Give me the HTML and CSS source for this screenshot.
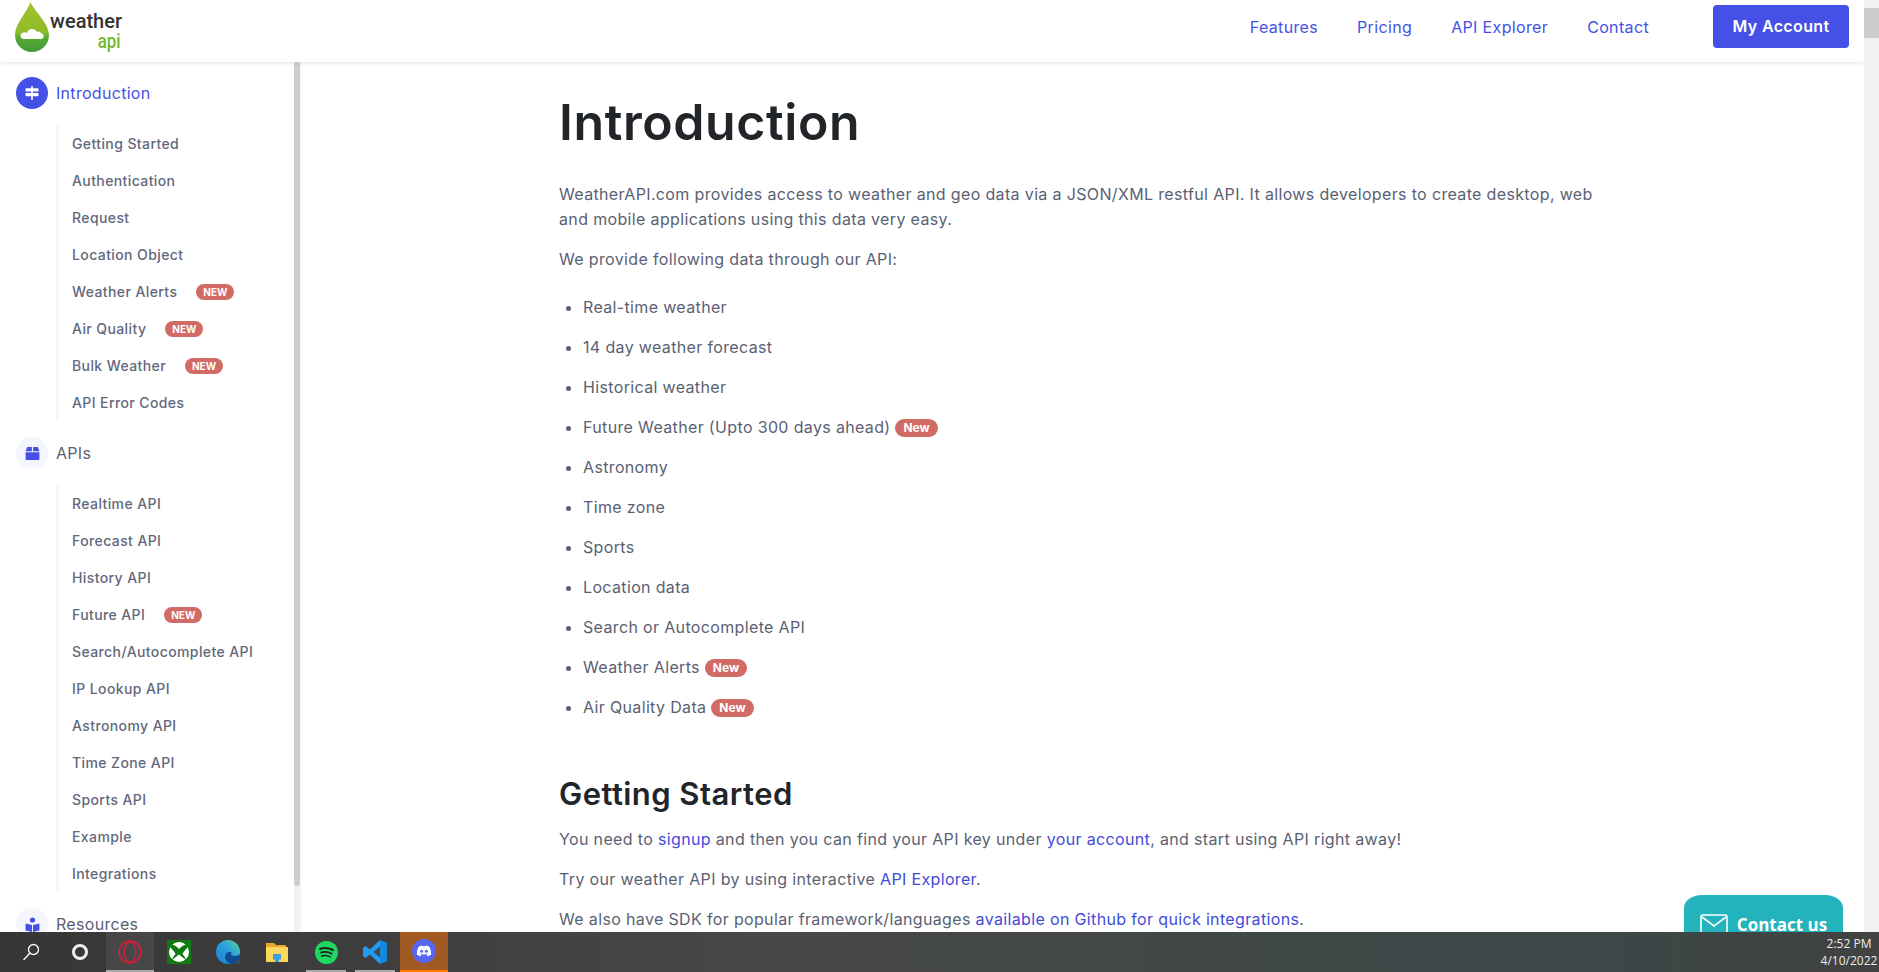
FILE: index.html
```html
<!DOCTYPE html>
<html lang="en">
<head>
    <meta charset="UTF-8">
    <title>Weather API - Documentation</title>
    <link rel="stylesheet" href="styles.css">
</head>
<body>
    <div class="page">
        <div class="window">
            <header class="topbar">
                <a class="logo" href="#">
                    <svg class="logo-drop" width="34" height="50" viewBox="0 0 34 50">
                        <defs>
                            <linearGradient id="dropFill" x1="0" y1="0" x2="0" y2="1">
                                <stop offset="0" stop-color="#a3c42c"/>
                                <stop offset="0.6" stop-color="#8fbc2b"/>
                                <stop offset="0.72" stop-color="#57a933"/>
                                <stop offset="1" stop-color="#3f9b35"/>
                            </linearGradient>
                        </defs>
                        <path d="M15.5 0 C13 9 0 21 0 33 C0 43 8 50 17 50 C26 50 34 43 34 33 C34 21 19 9 15.5 0 Z" fill="url(#dropFill)"/>
                        <path d="M9 37 C4.5 37 4.5 31 8.5 30.5 C10 30 11 30.5 12 31 C13 26 20 25.5 22 30 C23.5 29 25 29.5 26 31 C29.5 31.5 29.5 37 26 37 Z" fill="#fff"/>
                    </svg>
                    <span class="logo-text">
                        <span class="logo-weather">weather</span>
                        <span class="logo-api">api</span>
                    </span>
                </a>
                <nav class="topnav">
                    <a href="#">Features</a>
                    <a href="#">Pricing</a>
                    <a href="#">API Explorer</a>
                    <a href="#">Contact</a>
                    <a class="account-btn" href="#">My Account</a>
                </nav>
            </header>
            <div class="body-row">
                <aside class="sidebar">
                    <div class="side-head active">
                        <span class="side-icon">
                            <svg width="16" height="16" viewBox="0 0 16 16" fill="#fff">
                                <rect x="7.2" y="1" width="1.6" height="14"/>
                                <rect x="1.5" y="3.2" width="13" height="3.2" rx="0.6"/>
                                <rect x="1.5" y="8" width="13" height="3.2" rx="0.6"/>
                            </svg>
                        </span>
                        Introduction
                    </div>
                    <ul class="side-list">
                        <li>Getting Started</li>
                        <li>Authentication</li>
                        <li>Request</li>
                        <li>Location Object</li>
                        <li>Weather Alerts<span class="pill">NEW</span></li>
                        <li>Air Quality<span class="pill">NEW</span></li>
                        <li>Bulk Weather<span class="pill">NEW</span></li>
                        <li>API Error Codes</li>
                    </ul>
                    <div class="side-head">
                        <span class="side-icon">
                            <svg width="15" height="15" viewBox="0 0 15 15" fill="#4551e6">
                                <path d="M2.2 1 H6.9 V5.2 H0.6 Z"/>
                                <path d="M8.1 1 H12.8 L14.4 5.2 H8.1 Z"/>
                                <path d="M0.6 6.2 H14.4 V13 a1 1 0 0 1 -1 1 H1.6 a1 1 0 0 1 -1 -1 Z"/>
                            </svg>
                        </span>
                        APIs
                    </div>
                    <ul class="side-list">
                        <li>Realtime API</li>
                        <li>Forecast API</li>
                        <li>History API</li>
                        <li>Future API<span class="pill">NEW</span></li>
                        <li>Search/Autocomplete API</li>
                        <li>IP Lookup API</li>
                        <li>Astronomy API</li>
                        <li>Time Zone API</li>
                        <li>Sports API</li>
                        <li>Example</li>
                        <li>Integrations</li>
                    </ul>
                    <div class="side-head">
                        <span class="side-icon">
                            <svg width="15" height="15" viewBox="0 0 15 15" fill="#4551e6">
                                <circle cx="7.5" cy="3" r="2.6"/>
                                <path d="M0.6 6.5 L7 8 V15 L0.6 13.5 Z"/>
                                <path d="M14.4 6.5 L8 8 V15 L14.4 13.5 Z"/>
                            </svg>
                        </span>
                        Resources
                    </div>
                    <div class="side-scroll"><div class="side-thumb"></div></div>
                </aside>
                <main class="content">
                    <h1>Introduction</h1>
                    <p>WeatherAPI.com provides access to weather and geo data via a JSON/XML restful API. It allows developers to create desktop, web and mobile applications using this data very easy.</p>
                    <p>We provide following data through our API:</p>
                    <ul class="data-list">
                        <li>Real-time weather</li>
                        <li>14 day weather forecast</li>
                        <li>Historical weather</li>
                        <li>Future Weather (Upto 300 days ahead) <span class="pill">New</span></li>
                        <li>Astronomy</li>
                        <li>Time zone</li>
                        <li>Sports</li>
                        <li>Location data</li>
                        <li>Search or Autocomplete API</li>
                        <li>Weather Alerts <span class="pill">New</span></li>
                        <li>Air Quality Data <span class="pill">New</span></li>
                    </ul>
                    <h2>Getting Started</h2>
                    <p>You need to <a href="#">signup</a> and then you can find your API key under <a href="#">your account</a>, and start using API right away!</p>
                    <p>Try our weather API by using interactive <a href="#">API Explorer</a>.</p>
                    <p>We also have SDK for popular framework/languages <a href="#">available on Github for quick integrations</a>.</p>
                </main>
                <div class="page-scroll"><div class="page-thumb"></div></div>
            </div>
            <a class="contact-tab" href="#">
                <svg width="28" height="22" viewBox="0 0 28 22" fill="none" stroke="#fff" stroke-width="1.6">
                    <rect x="1" y="1" width="26" height="20" rx="2"/>
                    <path d="M2 3 L14 12 L26 3"/>
                </svg>
                Contact us
            </a>
        </div>
        <footer class="taskbar">
            <div class="task-search">
                <svg width="18" height="18" viewBox="0 0 18 18" fill="none" stroke="#fff" stroke-width="1.3">
                    <circle cx="11.5" cy="6.5" r="5"/>
                    <path d="M8 10 L1.5 17"/>
                </svg>
            </div>
            <div class="task-cortana"><span class="cortana-ring"></span></div>
            <div class="task-apps">
                <div class="task-app running opera">
                    <svg width="24" height="24" viewBox="0 0 24 24" fill="none" stroke="#d21f3c" stroke-width="1.5">
                        <circle cx="12" cy="12" r="11"/>
                        <ellipse cx="12" cy="12" rx="6" ry="10"/>
                    </svg>
                </div>
                <div class="task-app">
                    <svg width="24" height="24" viewBox="0 0 24 24">
                        <rect width="24" height="24" fill="#107c10"/>
                        <circle cx="12" cy="12" r="10" fill="#fff"/>
                        <path d="M12 9 C9 6 7 5 5 4.6 L3 7 C5 9 7.5 12 8.5 14 C6 17 5 19 5 20 L12 14.5 L19 20 C19 19 18 17 15.5 14 C16.5 12 19 9 21 7 L19 4.6 C17 5 15 6 12 9 Z" fill="#107c10"/>
                    </svg>
                </div>
                <div class="task-app">
                    <svg width="24" height="24" viewBox="0 0 24 24">
                        <defs>
                            <linearGradient id="edgeFill" x1="0" y1="1" x2="1" y2="0">
                                <stop offset="0" stop-color="#1b7fd0"/>
                                <stop offset="0.55" stop-color="#2a9fe0"/>
                                <stop offset="1" stop-color="#5fdc8c"/>
                            </linearGradient>
                        </defs>
                        <circle cx="12" cy="12" r="12" fill="url(#edgeFill)"/>
                        <path d="M24 14 C22 16 19 16.5 16.5 15.5 C15 15 14.6 13.5 15.6 12.5 C13 11 9 13 9 17 C9 20 11.5 23 15 24 L20 24 L24 19 Z" fill="#0e4c8f"/>
                        <path d="M24 15 C24 20 21 23 17.5 24 L24 24 Z" fill="#484848"/>
                    </svg>
                </div>
                <div class="task-app">
                    <svg width="22" height="19" viewBox="0 0 22 19">
                        <path d="M0 0 H8 L10 2 H20 V18 H0 Z" fill="#e8a92a"/>
                        <path d="M0 4 H22 V19 H0 Z" fill="#fbd75b"/>
                        <path d="M7 11 H15 V16.5 H13 V19 H9 V16.5 H7 Z" fill="#3d9fe0"/>
                    </svg>
                </div>
                <div class="task-app running short">
                    <svg width="23" height="23" viewBox="0 0 23 23">
                        <circle cx="11.5" cy="11.5" r="11.5" fill="#1ed760"/>
                        <g fill="none" stroke="#222" stroke-linecap="round">
                            <path d="M5 8 C9 6.6 14 7 18 9" stroke-width="2"/>
                            <path d="M6 11.6 C9.6 10.5 13.6 11 16.8 12.8" stroke-width="1.7"/>
                            <path d="M6.6 15 C9.6 14.2 13 14.5 15.6 16" stroke-width="1.4"/>
                        </g>
                    </svg>
                </div>
                <div class="task-app running short">
                    <svg width="24" height="24" viewBox="0 0 24 24">
                        <path d="M17 0 L24 3 V21 L17 24 L7 14.5 L2.5 18 L0 16.5 V7.5 L2.5 6 L7 9.5 Z" fill="#1f9cf0"/>
                        <path d="M17 6.5 L10.5 12 L17 17.5 Z" fill="#474747"/>
                        <path d="M17 0 L24 3 V21 L17 24 Z" fill="#0b7ac6" opacity="0.55"/>
                    </svg>
                </div>
                <div class="task-app discord">
                    <svg width="24" height="24" viewBox="0 0 24 24">
                        <circle cx="12" cy="12" r="12" fill="#5865f2"/>
                        <path d="M7 7.6 C8.2 7 9.4 6.7 10.4 6.6 L10.8 7.4 C11.6 7.3 12.4 7.3 13.2 7.4 L13.6 6.6 C14.6 6.7 15.8 7 17 7.6 C18.6 10 19.3 12.6 19.1 15.4 C17.8 16.4 16.5 16.9 15.3 17.2 L14.4 15.9 C15 15.7 15.5 15.4 16 15.1 L15.6 14.8 C13.2 15.9 10.8 15.9 8.4 14.8 L8 15.1 C8.5 15.4 9 15.7 9.6 15.9 L8.7 17.2 C7.5 16.9 6.2 16.4 4.9 15.4 C4.7 12.6 5.4 10 7 7.6 Z" fill="#fff"/>
                        <circle cx="9.6" cy="12.2" r="1.5" fill="#5865f2"/>
                        <circle cx="14.4" cy="12.2" r="1.5" fill="#5865f2"/>
                    </svg>
                </div>
            </div>
            <div class="task-clock">
                <span>2:52 PM</span>
                <span>4/10/2022</span>
            </div>
        </footer>
    </div>
</body>
</html>
```

FILE: styles.css
```css
* {
    box-sizing: border-box;
}

html,
body {
    margin: 0;
    height: 100%;
    overflow: hidden;
}

body {
    font-family: Inter, "Open Sans", sans-serif;
    color: #5a5f73;
    background-color: #fff;
}

a {
    text-decoration: none;
}

.page {
    height: 972px;
    display: flex;
    flex-direction: column;
}

.window {
    position: relative;
    flex: 1;
    min-height: 0;
    display: flex;
    flex-direction: column;
    overflow: hidden;
}

/* top bar */
.topbar {
    height: 62px;
    flex-shrink: 0;
    display: flex;
    justify-content: space-between;
    align-items: center;
    padding: 0 15px 9px 15px;
    margin-right: 15px;
    background-color: #fff;
    box-shadow: 0 1px 4px rgba(0, 0, 0, 0.12);
    position: relative;
    z-index: 2;
}

.logo {
    display: flex;
    align-items: flex-start;
    align-self: flex-start;
    height: 52px;
    margin-top: 2px;
}

.logo-text {
    display: flex;
    flex-direction: column;
    align-items: flex-end;
    width: 70px;
    margin-left: 3px;
    padding-top: 9px;
    font-family: Roboto, "Open Sans", sans-serif;
    font-weight: 500;
}

.logo-weather {
    font-size: 20px;
    line-height: 20px;
    color: #333;
}

.logo-api {
    font-size: 21px;
    line-height: 20px;
    color: #76b82a;
    transform: scaleX(0.8);
    transform-origin: right;
    margin-right: 2px;
}

.topnav {
    display: flex;
    align-items: center;
    font-size: 16px;
    letter-spacing: 0.35px;
}

.topnav a {
    color: #4551e6;
    margin-left: 39px;
}

.topnav a.account-btn {
    margin-left: 64px;
    width: 136px;
    height: 43px;
    line-height: 43px;
    text-align: center;
    background-color: #4551e6;
    color: #fff;
    font-weight: 600;
    border-radius: 4px;
}

/* body */
.body-row {
    flex: 1;
    min-height: 0;
    display: flex;
}

.sidebar {
    position: relative;
    width: 300px;
    flex-shrink: 0;
    padding: 15px 0 0 16px;
    overflow: hidden;
    box-shadow: 1px 0 3px rgba(0, 0, 0, 0.05);
}

.side-head {
    display: flex;
    align-items: center;
    gap: 8px;
    height: 32px;
    font-size: 16px;
    letter-spacing: 0.3px;
    color: #5a5f73;
}

.side-head.active {
    color: #4551e6;
}

.side-icon {
    width: 32px;
    height: 32px;
    border-radius: 50%;
    background-color: #f4f5ff;
    display: flex;
    align-items: center;
    justify-content: center;
}

.side-head.active .side-icon {
    background-color: #4551e6;
}

.side-list {
    list-style: none;
    margin: 16px 0 16px 40px;
    padding: 0 0 0 13px;
    border-left: 3px solid #f4f5ff;
    font-size: 14px;
    letter-spacing: 0.4px;
    font-weight: 500;
    color: #62677c;
}

.side-list li {
    height: 37px;
    display: flex;
    align-items: center;
}

.pill {
    display: inline-block;
    background-color: #d26a66;
    color: #fff;
    font-weight: 700;
    font-size: 12px;
    line-height: 18px;
    letter-spacing: 0;
    padding: 0 8px;
    border-radius: 9px;
    vertical-align: 1px;
}

.side-list .pill {
    font-size: 10px;
    line-height: 16px;
    padding: 0 7px;
    margin-left: 19px;
}

.side-scroll {
    position: absolute;
    top: 0;
    right: 0;
    bottom: 0;
    width: 6px;
    background-color: #f1f1f1;
}

.side-thumb {
    height: 824px;
    background-color: #cdcdcd;
    border-radius: 3px;
}

.content {
    flex: 1;
    min-width: 0;
    padding: 30px 0 0 259px;
    font-size: 16px;
    letter-spacing: 0.35px;
    line-height: 25px;
}

.content h1 {
    margin: 0 0 30px;
    font-size: 50px;
    letter-spacing: 0.6px;
    line-height: 60px;
    font-weight: 600;
    color: #212529;
}

.content p {
    width: 1050px;
    margin: 0 0 15px;
}

.content a {
    color: #3f4bd8;
}

.content h2 {
    margin: 56px 0 15px;
    font-size: 31px;
    letter-spacing: 0.45px;
    line-height: 36px;
    font-weight: 600;
    color: #212529;
}

.data-list {
    margin: 23px 0 0;
    padding: 0 0 0 24px;
}

.data-list li {
    margin-bottom: 15px;
}

.page-scroll {
    width: 15px;
    flex-shrink: 0;
    background-color: #f1f1f1;
    margin-top: -62px;
    position: relative;
    z-index: 3;
}

.page-thumb {
    height: 30px;
    margin-top: 8px;
    background-color: #cdcdcd;
}

.contact-tab {
    position: absolute;
    right: 36px;
    bottom: -14px;
    width: 159px;
    height: 51px;
    display: flex;
    align-items: flex-start;
    justify-content: center;
    gap: 9px;
    padding-top: 19px;
    background-color: #22b3bc;
    color: #fff;
    font-family: "Open Sans", sans-serif;
    font-weight: 700;
    font-size: 17px;
    line-height: 22px;
    border-radius: 18px 18px 0 0 / 13px 13px 0 0;
}

/* windows taskbar */
.taskbar {
    height: 40px;
    flex-shrink: 0;
    display: flex;
    align-items: center;
    background: linear-gradient(90deg, #363636, #474747 40%, #3c4747 85%, #424242);
    color: #fff;
    font-family: "Open Sans", sans-serif;
}

.task-search {
    width: 54px;
    padding-left: 22px;
    display: flex;
    align-items: center;
}

.task-cortana {
    width: 52px;
    display: flex;
    justify-content: center;
}

.cortana-ring {
    width: 16px;
    height: 16px;
    border: 3px solid #eee;
    border-radius: 50%;
}

.task-apps {
    display: flex;
    gap: 1px;
}

.task-app {
    position: relative;
    width: 48px;
    height: 40px;
    display: flex;
    align-items: center;
    justify-content: center;
}

.task-app.opera {
    background-color: #474747;
}

.task-app.running::after {
    content: "";
    position: absolute;
    left: 0;
    right: 0;
    bottom: 0;
    height: 2px;
    background-color: #aaa;
}

.task-app.short::after {
    left: 4px;
    right: 4px;
}

.task-app.discord {
    background-color: #a05a22;
    border-bottom: 2px solid #ff7a00;
}

.task-clock {
    margin-left: auto;
    width: 60px;
    display: flex;
    flex-direction: column;
    align-items: center;
    font-size: 12px;
    line-height: 17px;
    color: #eee;
}
```
